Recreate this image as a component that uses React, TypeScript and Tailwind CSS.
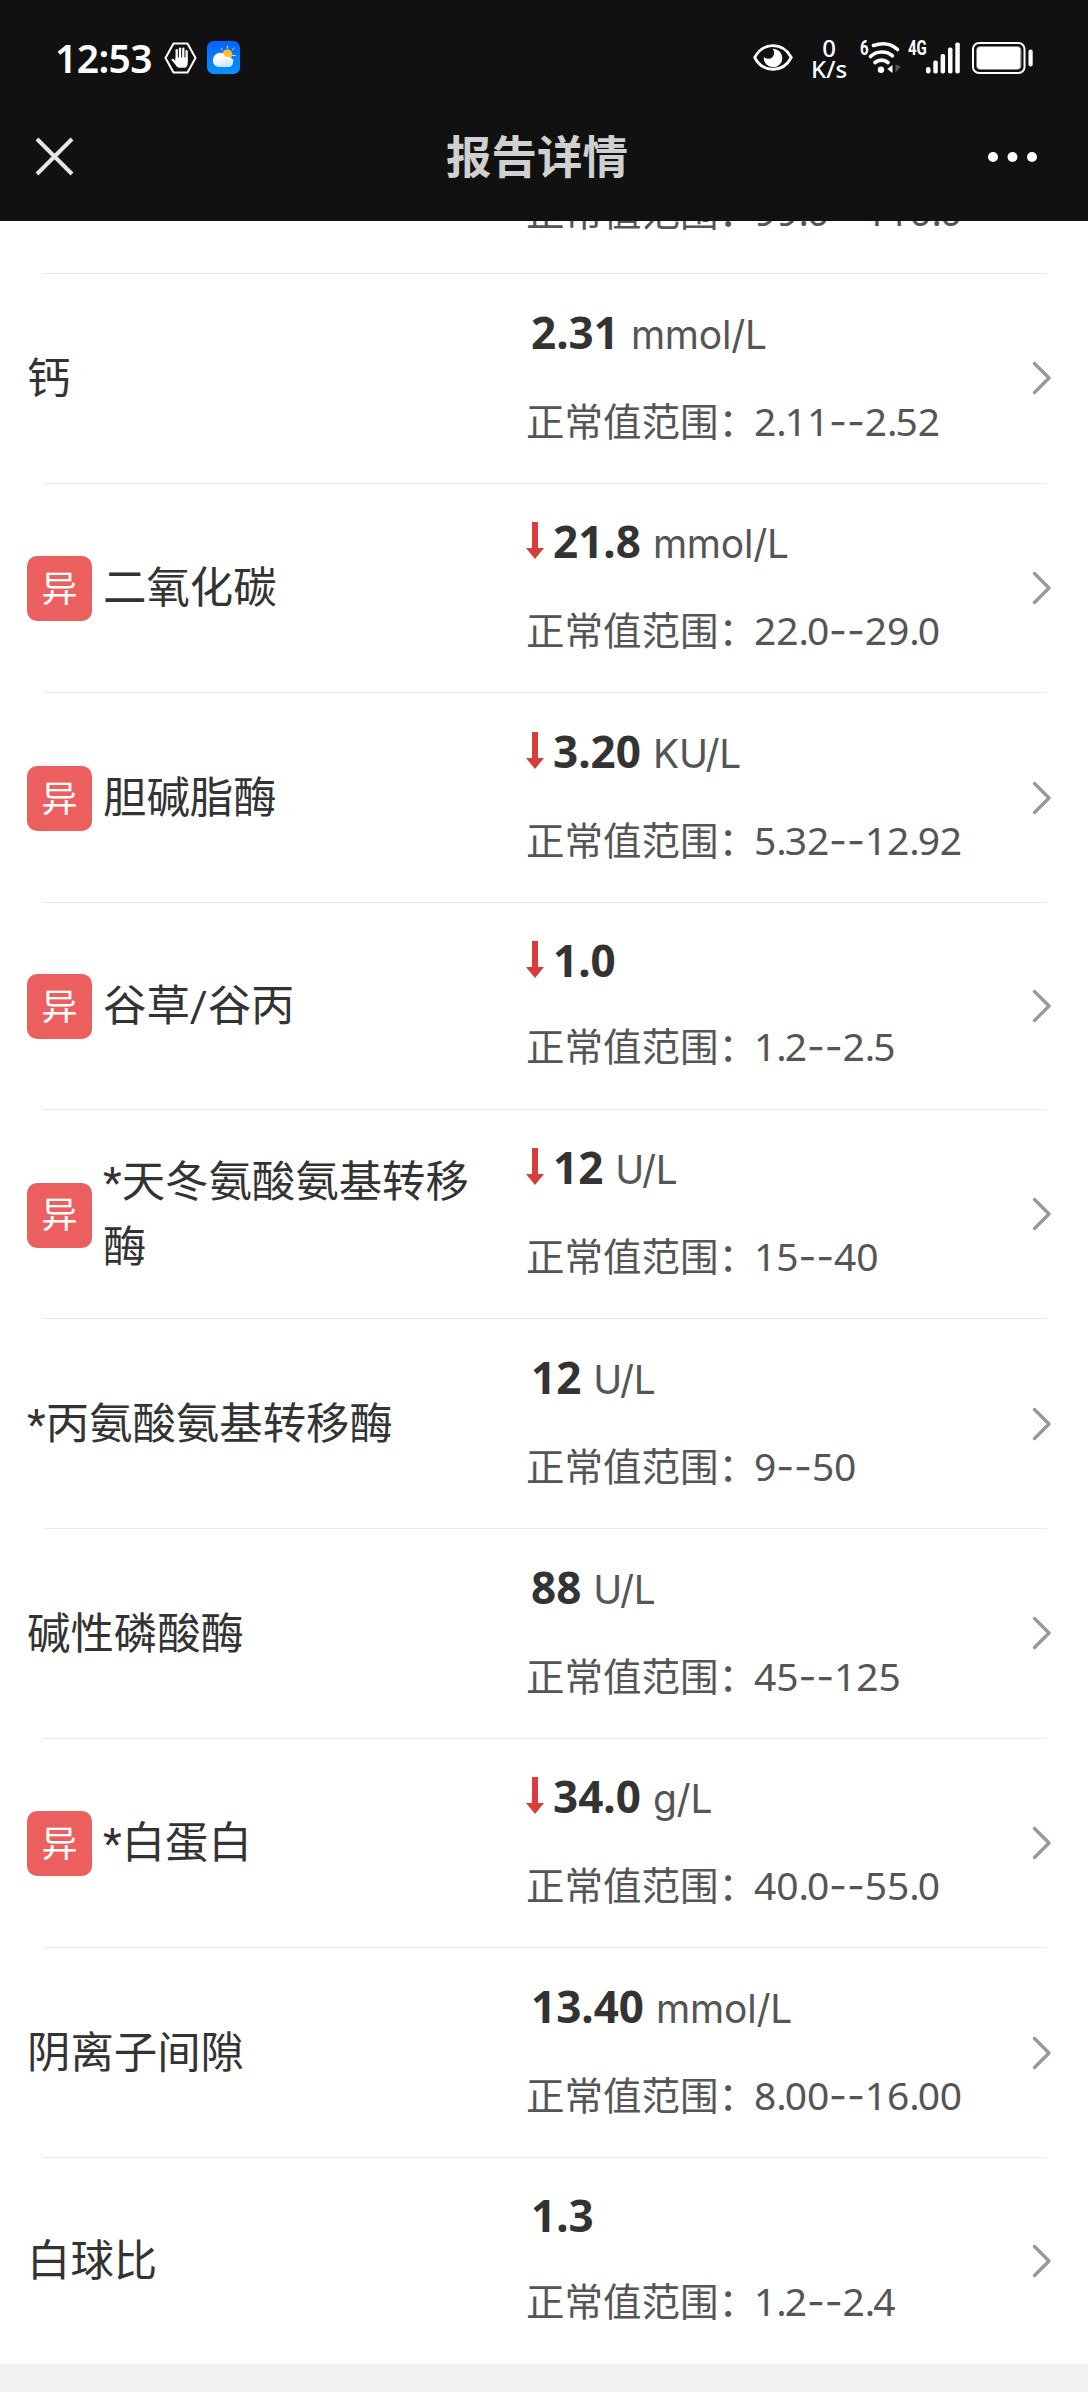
import clsx from 'clsx'

interface ReportItem {
  name: string
  value: string
  unit?: string
  range: string
  abnormal?: boolean
}

const items: ReportItem[] = [
  { name: '钙', value: '2.31', unit: 'mmol/L', range: '2.11--2.52' },
  { name: '二氧化碳', value: '21.8', unit: 'mmol/L', range: '22.0--29.0', abnormal: true },
  { name: '胆碱脂酶', value: '3.20', unit: 'KU/L', range: '5.32--12.92', abnormal: true },
  { name: '谷草/谷丙', value: '1.0', range: '1.2--2.5', abnormal: true },
  { name: '*天冬氨酸氨基转移酶', value: '12', unit: 'U/L', range: '15--40', abnormal: true },
  { name: '*丙氨酸氨基转移酶', value: '12', unit: 'U/L', range: '9--50' },
  { name: '碱性磷酸酶', value: '88', unit: 'U/L', range: '45--125' },
  { name: '*白蛋白', value: '34.0', unit: 'g/L', range: '40.0--55.0', abnormal: true },
  { name: '阴离子间隙', value: '13.40', unit: 'mmol/L', range: '8.00--16.00' },
  { name: '白球比', value: '1.3', range: '1.2--2.4' },
]

const HandIcon = () => (
  <svg width="33" height="32" viewBox="0 0 33 32" fill="none">
    <path d="M9.5 1.5h14L31.5 16l-8 14.5h-14L1.5 16z" stroke="#fff" strokeWidth="2" strokeLinejoin="round" />
    <g stroke="#fff" strokeWidth="2.3" strokeLinecap="round">
      <path d="M12.7 8.2v9" />
      <path d="M16 6.6v10" />
      <path d="M19.3 6.6v10" />
      <path d="M22.6 9.2v10" />
    </g>
    <path
      d="M11.500 15.500h12.200v5.300c0 3-1.200 5-3.200 5h-5c-2 0-3-1.400-4.200-3.200l-3.800-4.500c-.5-1 .8-1.800 1.800-1.200l2.200 1.700z"
      fill="#fff"
    />
  </svg>
)

const WeatherIcon = () => (
  <svg width="33" height="33" viewBox="0 0 33 33" fill="none">
    <defs>
      <linearGradient id="sky" x1="0" y1="0" x2="0" y2="1">
        <stop offset="0" stopColor="#0662fb" />
        <stop offset="1" stopColor="#0893ff" />
      </linearGradient>
      <linearGradient id="cloud" x1="0" y1="0" x2="0.4" y2="1">
        <stop offset="0.4" stopColor="#fff" />
        <stop offset="1" stopColor="#cde6fb" />
      </linearGradient>
    </defs>
    <rect width="33" height="33" rx="6.5" fill="url(#sky)" />
    <path
      d="M20.500 5v2.500M14 7l1.300 2.100M27 7l-1.500 2M24.800 14.500h3.700M25 18.200l1.700 1"
      stroke="#f6d667"
      strokeWidth="1"
      strokeLinecap="round"
    />
    <circle cx="20.3" cy="13.5" r="5" fill="#fcc22d" />
    <path
      d="M11.800 26A6 6 0 0 1 6 19.500c0-4 3-7.700 7-7.700 3 0 4.600 1.500 5.500 4.200 4-.8 7.600 1.500 7.600 5 0 3-2.100 5-5 5z"
      fill="url(#cloud)"
    />
  </svg>
)

const EyeIcon = () => (
  <svg width="40" height="27" viewBox="0 0 40 27" fill="none">
    <path
      d="M1.700 13.500C6 5.500 12.500 1.700 20 1.700s14 3.800 18.300 11.800C34 21.500 27.500 25.300 20 25.300S6 21.500 1.700 13.500z"
      stroke="#fff"
      strokeWidth="2.8"
      strokeLinejoin="round"
    />
    <path d="M19.500 4.700a9.300 9.300 0 1 1-8.700 8.300 4.600 4.600 0 0 0 8.700-8.300z" fill="#fff" />
  </svg>
)

const WifiIcon = () => (
  <svg width="34" height="33" viewBox="0 0 34 33" fill="none">
    <g stroke="#fff" strokeWidth="3.6" strokeLinecap="round">
      <path d="M6.500 4.500C15 1.500 24 2.500 30.500 8.500" />
      <path d="M3.500 15.500c6-5.800 16-6 22-.7" />
      <path d="M8 21.500c3.800-3.200 9.200-3.200 13 0" />
    </g>
    <circle cx="14" cy="28.7" r="3.2" fill="#fff" />
    <path d="M25.500 24v8l-5.200-4z" fill="#fff" />
    <path d="M28.500 23.500v8l5.500-6z" fill="#555" />
  </svg>
)

const SignalIcon = () => (
  <svg width="35" height="32" viewBox="0 0 35 32" fill="#fff">
    <rect x="0" y="25" width="4.5" height="6.5" rx="2" />
    <rect x="7.3" y="18.5" width="4.5" height="13" rx="1.8" />
    <rect x="14.6" y="12" width="4.5" height="19.5" rx="1.8" />
    <rect x="22" y="5.5" width="4.5" height="26" rx="1.8" />
    <rect x="29.3" y="0.5" width="4.5" height="31" rx="1.8" />
  </svg>
)

const BatteryIcon = () => (
  <svg width="61" height="32" viewBox="0 0 61 32" fill="none">
    <rect x="1" y="1" width="51.5" height="30" rx="6" stroke="#fff" strokeWidth="2" />
    <rect x="4.5" y="4.5" width="44.5" height="23" rx="3.5" stroke="#808080" />
    <rect x="5" y="5" width="43.5" height="22" rx="3" fill="#fff" />
    <rect x="56.5" y="7.5" width="4.2" height="17" rx="2" fill="#fff" />
  </svg>
)

const StatusBar = () => (
  <div className="flex h-[92px] items-center pt-[23px] pl-[55px]">
    <span className="w-[109px] text-[39px] leading-none font-semibold tracking-[-0.6px] whitespace-nowrap">12:53</span>
    <HandIcon />
    <span className="ml-[10px]">
      <WeatherIcon />
    </span>
    <div className="ml-auto flex items-center pr-[55px]">
      <EyeIcon />
      <div className="ml-[18px] flex w-[36px] flex-col items-center text-[24px] leading-[21px] font-medium">
        <span>0</span>
        <span>K/s</span>
      </div>
      <span className="mb-[19px] ml-[13px] w-[7px] origin-left scale-x-75 font-['Roboto'] text-[20px] leading-none font-bold">
        6
      </span>
      <WifiIcon />
      <span className="mb-[19px] ml-[7px] w-[18px] origin-left scale-x-75 font-['Roboto'] text-[20px] leading-none font-bold">
        4G
      </span>
      <SignalIcon />
      <span className="ml-[11px]">
        <BatteryIcon />
      </span>
    </div>
  </div>
)

const NavBar = () => (
  <div className="flex h-[129px] items-center justify-between pr-[50px] pl-[35px]">
    <svg width="39" height="39" viewBox="0 0 39 39" fill="none">
      <path d="M2 2l35 35M37 2L2 37" stroke="#e6e6e6" strokeWidth="4" />
    </svg>
    <h1 className="ml-[12px] text-[45.5px] leading-none font-bold text-[#d0d0d0]">报告详情</h1>
    <svg width="50" height="10" viewBox="0 0 50 10" fill="#fff">
      <circle cx="5" cy="5" r="5" />
      <circle cx="24.5" cy="5" r="5" />
      <circle cx="44" cy="5" r="5" />
    </svg>
  </div>
)

const DownArrow = () => (
  <svg width="18" height="37" viewBox="0 0 18 37" fill="#d93c3c">
    <path d="M6 0h6v26h6l-9 11-9-11h6z" />
  </svg>
)

// dashes are set wider and points tighter than the digits
const Range = ({ range }: { range: string }) => (
  <p className="flex text-[38.5px] leading-[58px] whitespace-nowrap text-[#555]">
    <span className="w-[228px]">正常值范围：</span>
    <span className="text-[39px] tracking-[-0.1px]">
      {range.split(/(--|\.)/).map((part, i) => (
        <span key={i} className={clsx(part === '--' && "font-['Inter']", part === '.' && 'tracking-[-2px]')}>
          {part}
        </span>
      ))}
    </span>
  </p>
)

const ReportRow = ({ item }: { item: ReportItem }) => (
  <li className={clsx('flex flex-col', item.unit ? 'h-[209.65px]' : 'h-[206.8px]')}>
    <div className="mr-[41px] ml-[43px] h-px shrink-0 bg-[#ebebeb]" />
    <div className="flex flex-1 pr-[36px] pl-[27px]">
      <div className="flex w-[499px] items-center gap-[11px]">
        {item.abnormal && (
          <span className="mt-[2px] flex size-[65px] shrink-0 items-center justify-center rounded-[10px] bg-[#ec5f5f] text-[36px] leading-none text-white">
            异
          </span>
        )}
        <span className="mt-[2px] w-[376px] font-['Roboto','Noto_Sans_CJK_SC',sans-serif] text-[43.4px] leading-[65px] text-[#333]">
          {item.name}
        </span>
      </div>
      <div className="flex flex-1 flex-col pt-[27.5px]">
        <div className="flex h-[60px] leading-[60px] whitespace-nowrap">
          {item.abnormal && (
            <span className="mt-[11px] mr-[9px]">
              <DownArrow />
            </span>
          )}
          <span className={clsx('text-[44px] font-bold text-[#333]', !item.abnormal && 'ml-[5px]')}>{item.value}</span>
          {item.unit && (
            <span className="ml-[12px] pt-[3px] font-['Inter',sans-serif] text-[39px] tracking-[-0.2px] text-[#555]">
              {item.unit}
            </span>
          )}
        </div>
        <div className={item.unit ? 'mt-[30px]' : 'mt-[27px]'}>
          <Range range={item.range} />
        </div>
      </div>
      <svg className="self-center" width="20" height="34" viewBox="0 0 20 34" fill="none">
        <path d="M2.500 2.500L17 17 2.500 31.500" stroke="#999" strokeWidth="3.4" strokeLinecap="round" strokeLinejoin="round" />
      </svg>
    </div>
  </li>
)

const App = () => {
  return (
    <div className="h-[2400px] w-[1088px] overflow-hidden bg-white font-['Noto_Sans','Noto_Sans_CJK_SC',sans-serif]">
      <header className="h-[221px] bg-[#111] text-white">
        <StatusBar />
        <NavBar />
      </header>
      {/* tail of the item scrolled under the header */}
      <div className="flex h-[52px] flex-col justify-end overflow-hidden pb-[32px] pl-[526px]">
        <Range range="99.0--110.0" />
      </div>
      <ul>
        {items.map((item, i) => (
          <ReportRow item={item} key={i} />
        ))}
      </ul>
      <div className="h-[28px] bg-[#f2f2f2]" />
    </div>
  )
}

export default App
